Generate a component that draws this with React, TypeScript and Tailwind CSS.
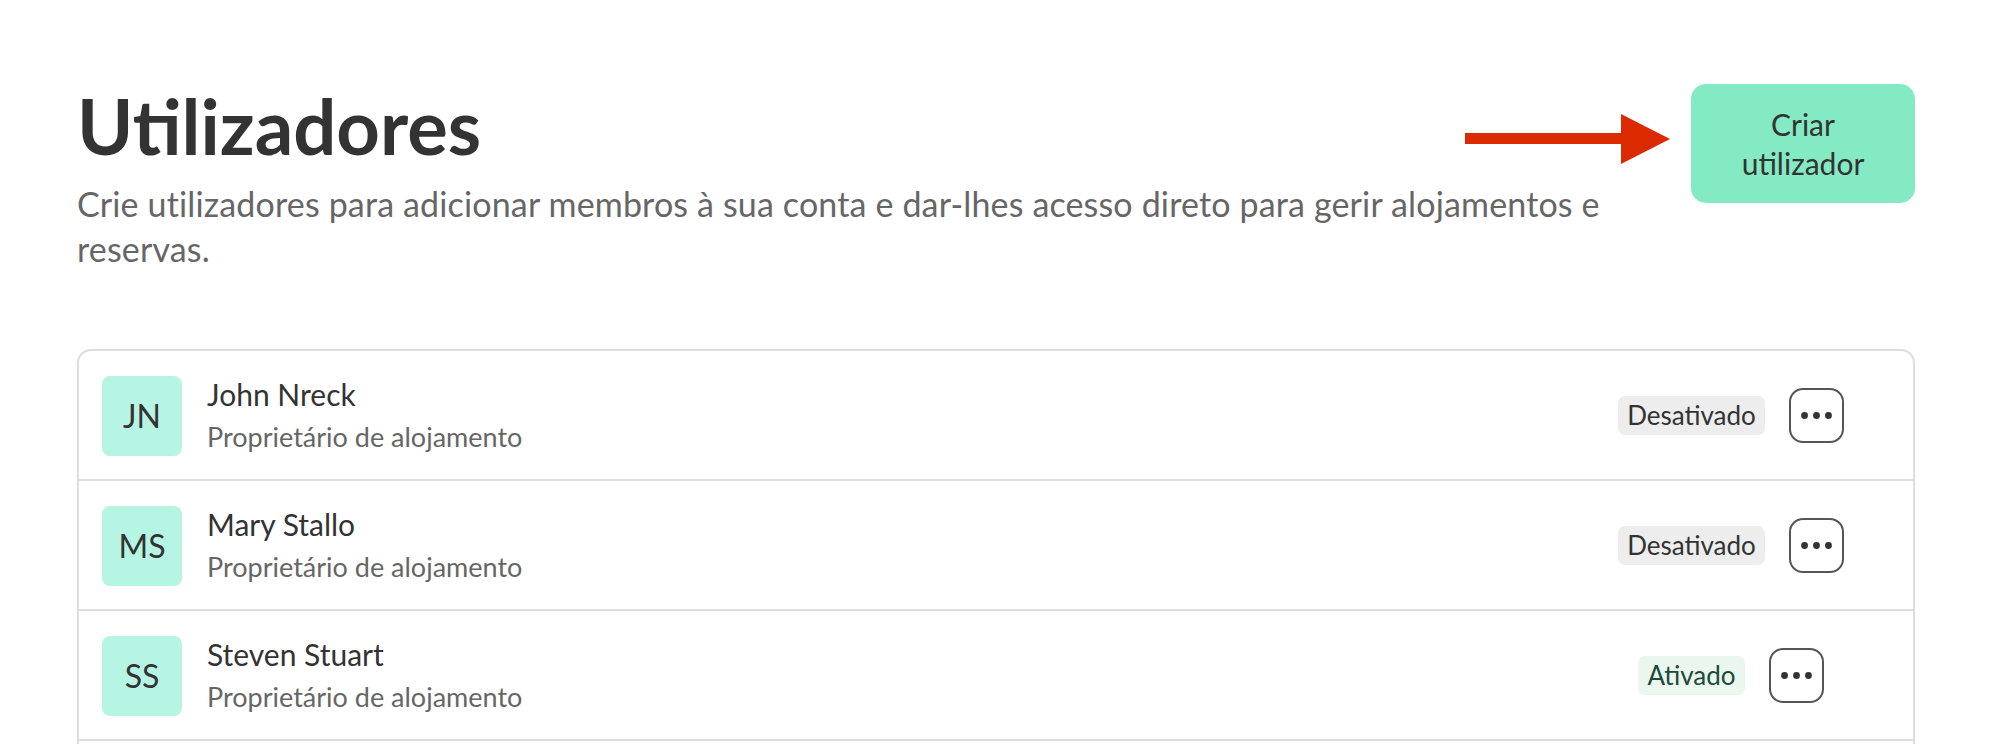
import { Ellipsis } from "lucide-react";

type User = {
  initials: string;
  name: string;
  role: string;
  active: boolean;
};

const users: User[] = [
  { initials: "JN", name: "John Nreck", role: "Proprietário de alojamento", active: false },
  { initials: "MS", name: "Mary Stallo", role: "Proprietário de alojamento", active: false },
  { initials: "SS", name: "Steven Stuart", role: "Proprietário de alojamento", active: true },
];

function StatusBadge({ active }: { active: boolean }) {
  if (active) {
    return (
      <span className="rounded-[7px] bg-[#eaf6ee] px-[9px] text-[26px] leading-[39px] text-[#1d4a3a]">
        Ativado
      </span>
    );
  }
  return (
    <span className="rounded-[7px] bg-[#ededed] px-[9px] text-[26px] leading-[39px] text-[#333]">
      Desativado
    </span>
  );
}

function UserRow({ user }: { user: User }) {
  return (
    <div className="flex items-center border-b-2 border-[#dddddd] pt-[23px] pb-[22px] pl-[23px]">
      <div className="flex h-[80px] w-[80px] shrink-0 items-center justify-center rounded-[8px] bg-[#b6f5e4] text-[32px] text-[#333]">
        {user.initials}
      </div>
      <div className="ml-[25px] flex flex-1 flex-col">
        <span className="text-[30px] leading-[40px] text-[#333]">{user.name}</span>
        <span className="mt-[3px] text-[27px] leading-[40px] text-[#666]">{user.role}</span>
      </div>
      <div className="mr-[52px] flex w-[260px] items-center justify-center gap-[24px]">
        <StatusBadge active={user.active} />
        <button className="flex h-[55px] w-[55px] items-center justify-center rounded-[14px] border-2 border-[#555] text-[#333]">
          <Ellipsis size={41} strokeWidth={2} />
        </button>
      </div>
    </div>
  );
}

export default function App() {
  return (
    <div className="min-h-screen bg-white font-['Lato',sans-serif] text-[#333]">
      <div className="relative pl-[77px] pr-[91px] pt-[84px]">
        <div className="flex items-start justify-between">
          <div className="max-w-[1560px]">
            <h1 className="mt-[4px] text-[76px] font-bold leading-none text-[#333]">Utilizadores</h1>
            <p className="mt-[17px] text-[34px] leading-[45px] tracking-[0.15px] text-[#666]">
              Crie utilizadores para adicionar membros à sua conta e dar-lhes acesso direto para
              gerir alojamentos e reservas.
            </p>
          </div>
          <button className="flex h-[119px] w-[224px] shrink-0 items-center justify-center rounded-[15px] bg-[#84eac4] text-[30px] leading-[39px] text-[#333]">
            Criar
            <br />
            utilizador
          </button>
        </div>

        <svg
          className="absolute left-[1465px] top-[114px]"
          width="205"
          height="50"
          viewBox="0 0 205 50"
        >
          <rect x="0" y="19" width="158" height="11" fill="#dc2a00" />
          <polygon points="156,0 205,25 156,50" fill="#dc2a00" />
        </svg>

        <div className="mt-[78px] rounded-[14px] border-2 border-[#dddddd]">
          {users.map((u) => (
            <UserRow key={u.initials} user={u} />
          ))}
          <div className="h-[60px]" />
        </div>
      </div>
    </div>
  );
}
